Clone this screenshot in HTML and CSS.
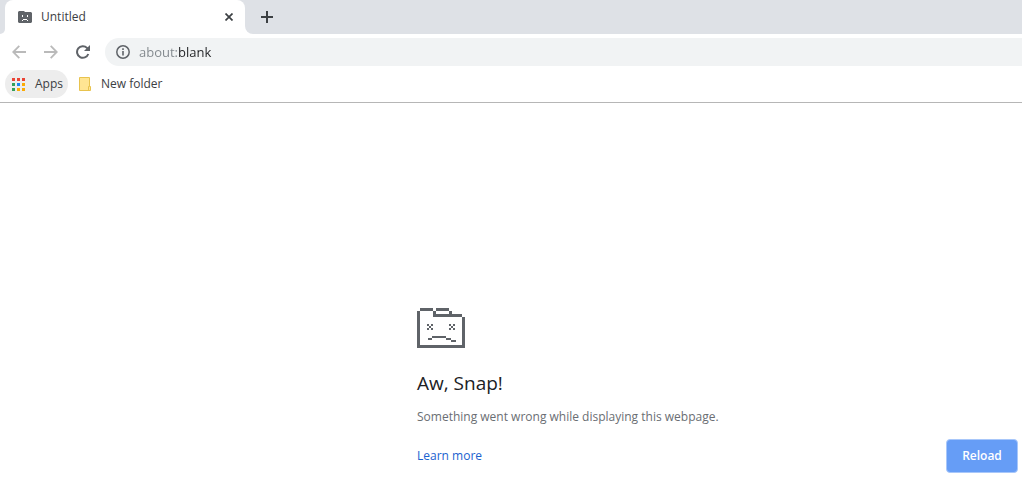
FILE: index.html
```html
<!DOCTYPE html>
<html lang="en">
<head>
<meta charset="utf-8">
<title>Untitled</title>
<link rel="stylesheet" href="styles.css">
</head>
<body>
<header>
  <div class="tabstrip">
    <div class="strip-edge"></div>
    <div class="tab">
      <svg class="tab-icon" width="14" height="12" viewBox="0 0 14 12" aria-hidden="true">
        <path fill="#5f6368" d="M1 0h5l1 1h6l1 1v9l-1 1H1l-1-1V1z"/>
        <path fill="#fff" d="M4 4h1v2H4zM9 4h1v2H9zM5 8h4v1H5zM4 9h1v1H4zM9 9h1v1H9z"/>
      </svg>
      <span class="tab-title">Untitled</span>
      <button class="icon-button" aria-label="Close tab">
        <svg width="8" height="8" viewBox="0 0 8 8"><path d="M.5.5l7 7M7.500.5l-7 7" stroke="#3c4043" stroke-width="1.7"/></svg>
      </button>
    </div>
    <div class="strip-rest">
      <button class="icon-button" aria-label="New tab">
        <svg width="12" height="12" viewBox="0 0 12 12"><path d="M6 0v12M0 6h12" stroke="#3c4043" stroke-width="2"/></svg>
      </button>
    </div>
  </div>
  <div class="toolbar">
    <button class="icon-button" aria-label="Back">
      <svg width="14" height="14" viewBox="0 0 14 14"><path d="M14 7H1.5M7.3 .8L1.2 7l6.1 6.2" fill="none" stroke="#bababa" stroke-width="1.8"/></svg>
    </button>
    <button class="icon-button" aria-label="Forward">
      <svg width="14" height="14" viewBox="0 0 14 14"><path d="M0 7h12.5M6.7 .8L12.8 7l-6.1 6.2" fill="none" stroke="#bababa" stroke-width="1.8"/></svg>
    </button>
    <button class="icon-button" aria-label="Reload page">
      <svg width="14" height="14" viewBox="0 0 14 14"><path d="M12.3 9A5.8 5.8 0 1 1 11 2.9L12 4" fill="none" stroke="#5f6368" stroke-width="2"/><path d="M14 0v6H8z" fill="#5f6368"/></svg>
    </button>
    <div class="omnibox">
      <svg width="14" height="14" viewBox="0 0 14 14" aria-hidden="true"><circle cx="7" cy="7" r="6.2" fill="none" stroke="#5f6368" stroke-width="1.5"/><path d="M6.2 3.3h1.6v1.6H6.2zM6.2 6h1.6v4.6H6.2z" fill="#5f6368"/></svg>
      <input class="address" type="text" value="about:blank" aria-label="Address">
    </div>
  </div>
  <nav class="bookmarks">
    <button class="bookmark apps">
      <svg width="13" height="13" viewBox="0 0 13 13" shape-rendering="crispEdges" aria-hidden="true">
        <path fill="#ea4335" d="M0 0h3v3H0zM5 0h3v3H5zM10 0h3v3h-3z"/>
        <path fill="#34a05a" d="M0 5h3v3H0zM0 10h3v3H0z"/>
        <path fill="#1a86f0" d="M5 5h3v3H5z"/>
        <path fill="#fbab05" d="M10 5h3v3h-3zM5 10h3v3H5zM10 10h3v3h-3z"/>
      </svg>
      Apps
    </button>
    <button class="bookmark">
      <svg width="12" height="14" viewBox="0 0 12 14" aria-hidden="true"><path d="M.5.5h10v9h1v4H.5z" fill="#ffe593" stroke="#e8c34e"/><path d="M9.500 13.500v-4h1" fill="none" stroke="#e8c34e"/></svg>
      New folder
    </button>
  </nav>
</header>
<main>
  <section class="error">
    <svg width="48" height="40" viewBox="0 0 48 40" shape-rendering="crispEdges" aria-hidden="true">
      <path fill="#5f6368" d="M3 0h13v3H3zM19 0h13v3H19zM0 3h3v37H0zM16 3h3v6h-3zM32 3h3v3h-3zM19 6h26v3H19zM45 9h3v31h-3zM3 37h42v3H3z"/>
      <path fill="#5f6368" d="M10 16h2v2h-2zM14 16h2v2h-2zM12 18h2v2h-2zM10 20h2v2h-2zM14 20h2v2h-2zM32 16h2v2h-2zM36 16h2v2h-2zM34 18h2v2h-2zM32 20h2v2h-2zM36 20h2v2h-2zM11 30h4v2h-4zM15 28h14v2H15zM29 30h5v2h-5zM34 32h5v2h-5z"/>
    </svg>
    <h1>Aw, Snap!</h1>
    <p>Something went wrong while displaying this webpage.</p>
    <div class="actions">
      <a href="#">Learn more</a>
      <button class="reload">Reload</button>
    </div>
  </section>
</main>
</body>
</html>
```
FILE: styles.css
```css
* {
  box-sizing: border-box;
}

body {
  margin: 0;
  background: #fff;
  color: #3c4043;
  font: 12px/16px "Segoe UI", "Open Sans", "Noto Sans", sans-serif;
}

button,
input {
  margin: 0;
  padding: 0;
  border: 0;
  background: none;
  color: inherit;
  font: inherit;
}

svg {
  display: block;
  flex: none;
}

.tabstrip {
  display: flex;
  height: 34px;
  background: linear-gradient(#fff, #fff) 0 100% / 260px 12px no-repeat #dee1e6;
}

.strip-edge {
  width: 5px;
  background: #dee1e6;
  border-radius: 0 0 5px 0;
}

.tab {
  display: flex;
  align-items: center;
  gap: 9px;
  width: 240px;
  padding: 0 8px 0 13px;
  background: #fff;
  border-radius: 8px 8px 0 0;
}

.tab-title {
  flex: 1;
}

.icon-button {
  display: flex;
  align-items: center;
  justify-content: center;
  width: 16px;
  height: 16px;
}

.strip-rest {
  flex: 1;
  padding: 9px 14px;
  background: #dee1e6;
  border-radius: 0 0 0 8px;
}

.toolbar {
  display: flex;
  align-items: center;
  gap: 16px;
  height: 36px;
  padding-left: 11px;
}

.omnibox {
  display: flex;
  flex: 1;
  align-items: center;
  gap: 9px;
  height: 28px;
  margin-left: -2px;
  padding-left: 11px;
  background: #f1f3f4;
  border-radius: 14px 0 0 14px;
}

.address {
  flex: 1;
  min-width: 0;
  height: 24px;
  background: linear-gradient(90deg, #80868b 39px, #202124 39px);
  background-clip: text;
  -webkit-background-clip: text;
  color: transparent;
  font-size: 13px;
  outline: 0;
}

.bookmarks {
  display: flex;
  gap: 6px;
  height: 33px;
  padding-left: 5px;
  border-bottom: 1px solid #b6b6b6;
}

.bookmark {
  display: flex;
  align-items: center;
  gap: 10px;
  height: 28px;
  padding: 0 5px;
  border-radius: 14px;
}

.apps {
  padding-left: 7px;
  background: #ededed;
}

main {
  padding: 205px 4px 18px 417px;
}

h1 {
  margin: 23px 0 0;
  color: #202124;
  font-size: 19px;
  font-weight: 400;
  line-height: 24px;
}

p {
  margin: 14px 0 0;
  color: #6a6e73;
}

.actions {
  display: flex;
  align-items: center;
  justify-content: space-between;
  margin-top: 14px;
}

a {
  color: #1a62cf;
  text-decoration: none;
}

.reload {
  width: 72px;
  height: 34px;
  background: #669df6;
  border: 1px solid #a8c7fa;
  border-radius: 4px;
  color: #fff;
  font-weight: 600;
}
```
